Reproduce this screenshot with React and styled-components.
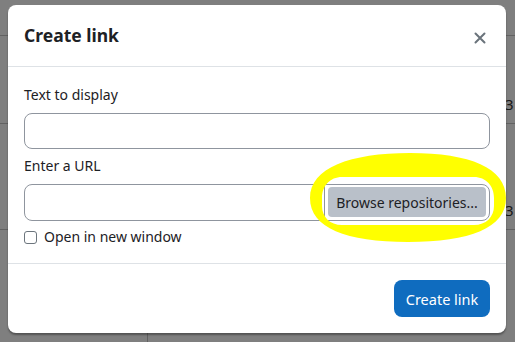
import React from "react";
import styled, { createGlobalStyle } from "styled-components";

const Global = createGlobalStyle`
  html, body { margin: 0; padding: 0; }
  body {
    width: 515px;
    height: 342px;
    overflow: hidden;
    background: #fff;
    font-family: "Noto Sans", "Open Sans", sans-serif;
  }
`;

const Page = styled.div`
  position: relative;
  width: 515px;
  height: 342px;
  overflow: hidden;
`;

const BackTable = styled.div`
  display: grid;
  grid-template-columns: 148px 1fr 10px;
  grid-template-rows: 36px 88px 106px 1fr;
  height: 342px;
`;

const BackCell = styled.div`
  border-bottom: ${(p) => (p.$line ? "1px solid #c4c4c4" : "none")};
  border-right: ${(p) => (p.$vline ? "1px solid #c4c4c4" : "none")};
  font-family: "Noto Sans", sans-serif;
  font-size: 15px;
  color: #333;
  display: flex;
  align-items: flex-end;
  padding-bottom: 9px;
  overflow: hidden;
`;

const Backdrop = styled.div`
  position: absolute;
  inset: 0;
  background: rgba(0, 0, 0, 0.5);
  display: flex;
  align-items: flex-start;
  padding: 5px 0 0 8px;
`;

const Dialog = styled.div`
  width: 498px;
  background: #fff;
  border-radius: 8px;
  box-shadow: 0 2px 2px rgba(0, 0, 0, 0.35);
  display: flex;
  flex-direction: column;
  color: #1d2125;
`;

const Header = styled.div`
  height: 61px;
  display: flex;
  align-items: center;
  justify-content: space-between;
  padding: 0 20px 0 16px;
  border-bottom: 1px solid #dee2e6;
`;

const Title = styled.h5`
  margin: 0;
  font-size: 17.5px;
  font-weight: 700;
  color: #1d2125;
  line-height: 1.2;
`;

const CloseButton = styled.button`
  border: 0;
  background: none;
  padding: 0;
  width: 12px;
  height: 12px;
  margin-top: 4px;
  display: flex;
  cursor: pointer;
`;

const Body = styled.div`
  padding: 17px 16px 16px;
  display: flex;
  flex-direction: column;
`;

const Label = styled.label`
  font-size: 14px;
  line-height: 22px;
  margin-bottom: ${(p) => p.$mb || 8}px;
  color: #1d2125;
`;

const TextInput = styled.input`
  box-sizing: border-box;
  width: 100%;
  height: ${(p) => p.$h || 36}px;
  flex: none;
  border: 1px solid #8f959e;
  border-radius: 8px;
  font: inherit;
  font-size: 14px;
  padding: 0 12px;
  margin: 0 0 ${(p) => p.$mb || 0}px;
  outline: none;
`;

const GroupInput = styled(TextInput)`
  flex: 1;
  width: auto;
  min-width: 0;
  border-radius: 8px 0 0 8px;
`;

const InputGroup = styled.div`
  display: flex;
  height: 37px;
  margin-bottom: 6px;
`;

const BrowseButton = styled.button`
  box-sizing: border-box;
  height: 37px;
  width: 166px;
  margin-left: -1px;
  border: 1px solid #8f959e;
  border-radius: 0 8px 8px 0;
  background: #fff;
  padding: 2px 3px 3px 3px;
  display: flex;
  cursor: pointer;
`;

const BrowseInner = styled.span`
  flex: 1;
  background: #b9c0c9;
  border-radius: 4px;
  display: flex;
  align-items: center;
  justify-content: center;
  font-family: "Noto Sans", sans-serif;
  font-size: 14px;
  color: #1d2125;
`;

const CheckRow = styled.label`
  display: flex;
  align-items: center;
  gap: 7px;
  font-size: 14px;
  line-height: 20px;
  color: #1d2125;
`;

const CheckBox = styled.span`
  box-sizing: border-box;
  width: 13px;
  height: 13px;
  border: 1px solid #6c757d;
  border-radius: 3px;
  background: #fff;
`;

const Footer = styled.div`
  box-sizing: border-box;
  border-top: 1px solid #dee2e6;
  height: 70px;
  display: flex;
  align-items: flex-start;
  justify-content: flex-end;
  padding: 16px 16px 0;
`;

const PrimaryButton = styled.button`
  box-sizing: border-box;
  width: 96px;
  height: 37px;
  border: 0;
  border-radius: 8px;
  background: #0f6cbf;
  color: #fff;
  font-family: "Noto Sans", sans-serif;
  font-size: 14.5px;
  cursor: pointer;
`;

const Highlight = styled.svg`
  position: absolute;
  left: 0;
  top: 0;
  pointer-events: none;
`;

export default function App() {
  return (
    <Page>
      <Global />
      <BackTable>
        <BackCell $line />
        <BackCell $line />
        <BackCell $line />
        <BackCell $line $vline />
        <BackCell $line />
        <BackCell $line>3</BackCell>
        <BackCell $line $vline />
        <BackCell $line />
        <BackCell $line>3</BackCell>
        <BackCell $vline />
        <BackCell />
        <BackCell />
      </BackTable>
      <Backdrop>
        <Dialog>
          <Header>
            <Title>Create link</Title>
            <CloseButton aria-label="Close">
              <svg width="12" height="12" viewBox="0 0 12 12">
                <path d="M1.5 1.5 L10.5 10.5 M10.5 1.5 L1.5 10.5" stroke="#6a737b" strokeWidth="2" strokeLinecap="round" />
              </svg>
            </CloseButton>
          </Header>
          <Body>
            <Label $mb={7}>Text to display</Label>
            <TextInput $h={36} $mb={6} />
            <Label $mb={7}>Enter a URL</Label>
            <InputGroup>
              <GroupInput $h={37} />
              <BrowseButton>
                <BrowseInner>Browse repositories...</BrowseInner>
              </BrowseButton>
            </InputGroup>
            <CheckRow>
              <CheckBox />
              Open in new window
            </CheckRow>
          </Body>
          <Footer>
            <PrimaryButton>Create link</PrimaryButton>
          </Footer>
        </Dialog>
      </Backdrop>
      <Highlight width="515" height="342" viewBox="0 0 515 342">
        <path
          fillRule="evenodd"
          fill="#ffff00"
          d="M310 198 C310 168 350 153 410 153 C470 153 506 168 506 198 C506 228 470 242 408 242 C346 242 310 228 310 198 Z
             M342 177 L474 177 C486 177 494 186 494 198 L494 206 C494 217 486 225 474 225 L342 225 C330 225 322 217 322 206 L322 198 C322 186 330 177 342 177 Z"
        />
      </Highlight>
    </Page>
  );
}
